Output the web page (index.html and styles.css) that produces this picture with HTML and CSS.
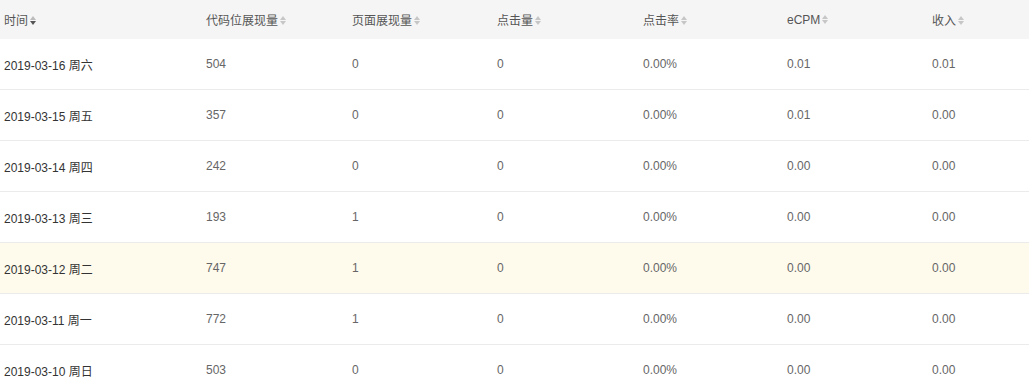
FILE: index.html
```html
<!DOCTYPE html>
<html lang="zh-CN">
<head>
<meta charset="utf-8">
<title>报表</title>
<link rel="stylesheet" href="styles.css">
</head>
<body>
<table class="report">
  <colgroup>
    <col class="c-date"><col class="c1"><col class="c2"><col class="c3"><col class="c4"><col class="c5"><col class="c6">
  </colgroup>
  <thead>
    <tr>
      <th>时间<span class="sort desc"><i class="up"></i><i class="down"></i></span></th>
      <th>代码位展现量<span class="sort"><i class="up"></i><i class="down"></i></span></th>
      <th>页面展现量<span class="sort"><i class="up"></i><i class="down"></i></span></th>
      <th>点击量<span class="sort"><i class="up"></i><i class="down"></i></span></th>
      <th>点击率<span class="sort"><i class="up"></i><i class="down"></i></span></th>
      <th>eCPM<span class="sort"><i class="up"></i><i class="down"></i></span></th>
      <th>收入<span class="sort"><i class="up"></i><i class="down"></i></span></th>
    </tr>
  </thead>
  <tbody>
    <tr><td class="date">2019-03-16 周六</td><td>504</td><td>0</td><td>0</td><td>0.00%</td><td>0.01</td><td>0.01</td></tr>
    <tr><td class="date">2019-03-15 周五</td><td>357</td><td>0</td><td>0</td><td>0.00%</td><td>0.01</td><td>0.00</td></tr>
    <tr><td class="date">2019-03-14 周四</td><td>242</td><td>0</td><td>0</td><td>0.00%</td><td>0.00</td><td>0.00</td></tr>
    <tr><td class="date">2019-03-13 周三</td><td>193</td><td>1</td><td>0</td><td>0.00%</td><td>0.00</td><td>0.00</td></tr>
    <tr class="hover"><td class="date">2019-03-12 周二</td><td>747</td><td>1</td><td>0</td><td>0.00%</td><td>0.00</td><td>0.00</td></tr>
    <tr><td class="date">2019-03-11 周一</td><td>772</td><td>1</td><td>0</td><td>0.00%</td><td>0.00</td><td>0.00</td></tr>
    <tr><td class="date">2019-03-10 周日</td><td>503</td><td>0</td><td>0</td><td>0.00%</td><td>0.00</td><td>0.00</td></tr>
  </tbody>
</table>
</body>
</html>
```

FILE: styles.css
```css
html, body {
  margin: 0;
  padding: 0;
  background: #fff;
}
body {
  font-family: "Liberation Sans", Arial, "Noto Sans CJK SC", sans-serif;
  font-size: 12px;
  color: #666;
}
.report {
  width: 1029px;
  border-collapse: collapse;
  table-layout: fixed;
}
.c-date { width: 202px; }
.c1 { width: 146px; }
.c2 { width: 145px; }
.c3 { width: 146px; }
.c4 { width: 144px; }
.c5 { width: 145px; }
.c6 { width: 101px; }

.report th {
  height: 39px;
  padding: 0 0 0 4px;
  text-align: left;
  font-weight: normal;
  color: #555;
  background: #f5f5f5;
  white-space: nowrap;
}
.report td {
  height: 50px;
  padding: 0 0 0 4px;
  border-bottom: 1px solid #ebebeb;
  color: #666;
  white-space: nowrap;
}
.report td.date {
  color: #333;
}
.report tr.hover td {
  background: #fefbed;
}

.sort {
  display: inline-flex;
  flex-direction: column;
  gap: 1px;
  margin-left: 2px;
  vertical-align: middle;
  position: relative;
  top: -1px;
}
.sort i {
  display: block;
  width: 0;
  height: 0;
  border-left: 3.5px solid transparent;
  border-right: 3.5px solid transparent;
}
.sort .up {
  border-bottom: 4px solid #c6c6c6;
}
.sort .down {
  border-top: 4px solid #c6c6c6;
}
.sort.desc .up {
  border-bottom-color: #bbb;
}
.sort.desc .down {
  border-top-color: #555;
}
```
